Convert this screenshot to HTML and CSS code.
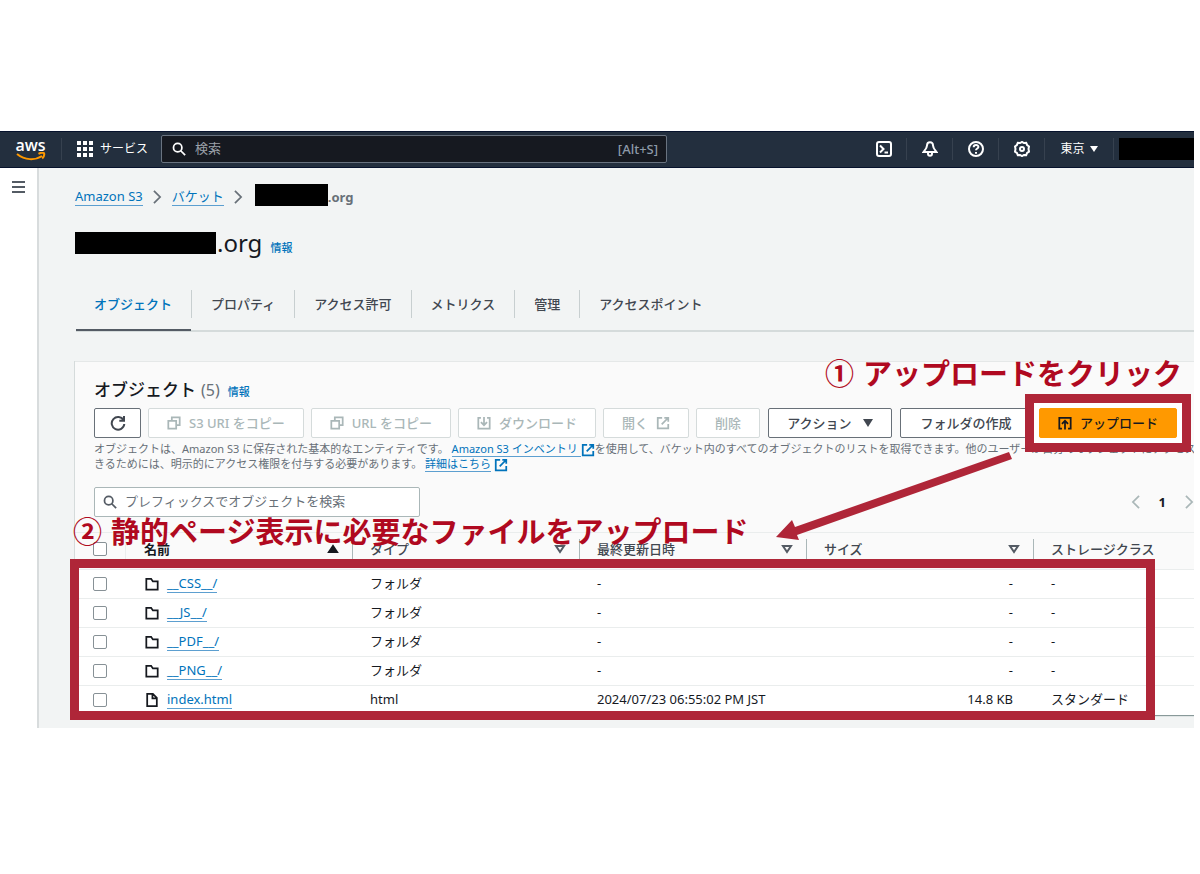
FILE: index.html
```html
<!DOCTYPE html>
<html lang="ja">
<head>
<meta charset="utf-8">
<title>Amazon S3</title>
<link rel="stylesheet" href="styles.css">
</head>
<body>
<svg class="defs" aria-hidden="true">
  <symbol id="search" viewBox="0 0 16 16"><circle cx="6.5" cy="6.5" r="4.8"/><path d="M10 10l5 5"/></symbol>
  <symbol id="copy" viewBox="0 0 16 16"><path d="M1.5 5.500h9v9h-9zM5.500 5.500v-4h9v9h-4"/></symbol>
  <symbol id="external" viewBox="0 0 16 16"><path d="M7 2H2v12h12V9M9.500 2H14v4.500M14 2L6.500 9.500"/></symbol>
  <symbol id="folder" viewBox="0 0 16 16"><path d="M1.500 2h5.500l2 3h5.500v9.500h-13z"/></symbol>
  <symbol id="file" viewBox="0 0 16 16"><path d="M2.500 1h6.500l4.500 4.500v9.500h-11zM8.500 1v5h5"/></symbol>
  <symbol id="chevron" viewBox="0 0 16 16"><path d="M4.500 1l7 7-7 7"/></symbol>
  <symbol id="sort" viewBox="0 0 12 12"><path d="M2 3h8L6 9z"/></symbol>
</svg>
<div class="console">
  <header class="topbar">
    <a class="logo" href="#" aria-label="aws"><span>aws</span>
      <svg class="smile" viewBox="0 0 30 9"><path d="M1 2c8 6.500 18 6.500 25 2"/><path d="M22.500 1.800c2-1 4.500-1.200 5.500-.6.500 1.300-.3 3.800-1.800 5.300"/></svg></a>
    <button class="services"><svg class="grid" viewBox="0 0 16 16"><path d="M0 0h4v4H0zM6 0h4v4H6zM12 0h4v4h-4zM0 6h4v4H0zM6 6h4v4H6zM12 6h4v4h-4zM0 12h4v4H0zM6 12h4v4H6zM12 12h4v4h-4z"/></svg>サービス</button>
    <label class="top-search"><svg class="icon"><use href="#search"/></svg><input type="text" placeholder="検索" aria-label="検索"><span>[Alt+S]</span></label>
    <nav class="tools">
      <button class="tool" aria-label="CloudShell"><svg class="icon big" viewBox="0 0 16 16"><rect x="1" y="1" width="14" height="14" rx="2"/><path d="M4 4.500L7.500 8 4 11.500M8.500 11.500H12"/></svg></button>
      <button class="tool" aria-label="通知"><svg class="icon big" viewBox="0 0 16 16"><path d="M8 1.200c-2 0-3 1.500-3 3.300C5 7 3.500 8.500 1.500 11h13C12.500 8.500 11 7 11 4.500c0-1.800-1-3.300-3-3.300zM6 11.500v1.300a2 2 0 004 0v-1.300"/></svg></button>
      <button class="tool" aria-label="ヘルプ"><svg class="icon big" viewBox="0 0 16 16"><circle cx="8" cy="8" r="7"/><path d="M5.700 6.200c0-3 4.700-3 4.700-.2C10.400 7.600 8 7.500 8 9.300M8 11v1.700"/></svg></button>
      <button class="tool" aria-label="設定"><svg class="icon big" viewBox="0 0 16 16"><path d="M8 .9l1.900 1.100 2.300-.1.900 2.100 1.900 1.400-.5 2.600.5 2.600-1.900 1.300-.9 2.200-2.300-.1L8 15.100l-1.900-1.100-2.300.1-.9-2.200L1 10.600 1.500 8 1 5.400 2.900 4l.9-2.100 2.300.1z"/><circle cx="8" cy="8" r="2"/></svg></button>
      <button class="tool region">東京<span class="down"></span></button>
      <span class="account"></span>
    </nav>
  </header>
  <div class="body">
    <aside class="rail"><button class="menu" aria-label="メニュー"><i></i><i></i><i></i></button></aside>
    <main class="main">
      <nav class="crumbs">
        <a class="link" href="#">Amazon S3</a><svg class="icon"><use href="#chevron"/></svg>
        <a class="link" href="#">バケット</a><svg class="icon"><use href="#chevron"/></svg>
        <span class="current"><span class="mask"></span>.org</span>
      </nav>
      <h1 class="title"><span class="mask"></span>.org <a href="#">情報</a></h1>
      <div class="tabs" role="tablist">
        <button class="tab active" role="tab">オブジェクト</button>
        <button class="tab" role="tab">プロパティ</button>
        <button class="tab" role="tab">アクセス許可</button>
        <button class="tab" role="tab">メトリクス</button>
        <button class="tab" role="tab">管理</button>
        <button class="tab" role="tab">アクセスポイント</button>
      </div>
      <section class="panel">
        <div class="panel-head">
          <h2>オブジェクト <span>(5)</span> <a href="#">情報</a></h2>
          <div class="buttons">
            <button class="btn refresh" aria-label="更新"><svg class="icon big" viewBox="0 0 16 16"><path d="M13.500 5.200A6.300 6.300 0 1014.300 9M14 1v4.800H9.300"/></svg></button>
            <button class="btn" disabled><svg class="icon"><use href="#copy"/></svg>S3 URI をコピー</button>
            <button class="btn" disabled><svg class="icon"><use href="#copy"/></svg>URL をコピー</button>
            <button class="btn" disabled><svg class="icon" viewBox="0 0 16 16"><path d="M4.500 2H1.500v12.500h13V2h-3M8 1v9.500M4.500 7L8 10.500 11.500 7"/></svg>ダウンロード</button>
            <button class="btn" disabled>開く<svg class="icon"><use href="#external"/></svg></button>
            <button class="btn" disabled>削除</button>
            <button class="btn actions">アクション<span class="down"></span></button>
            <button class="btn create">フォルダの作成</button>
            <div class="upload-wrap"><span class="callout"></span><button class="btn primary"><svg class="icon" viewBox="0 0 16 16"><path d="M4.500 14.500h-3V2h13v12.500h-3M8 15.500V6M4.500 9L8 5.500 11.500 9"/></svg>アップロード</button></div>
          </div>
          <p class="desc">オブジェクトは、Amazon S3 に保存された基本的なエンティティです。 <a class="link" href="#">Amazon S3 インベントリ </a> <svg class="icon"><use href="#external"/></svg>を使用して、バケット内のすべてのオブジェクトのリストを取得できます。他のユーザーが自分のオブジェクトにアクセスで<br>きるためには、明示的にアクセス権限を付与する必要があります。 <a class="link" href="#">詳細はこちら</a> <svg class="icon"><use href="#external"/></svg></p>
          <div class="filter">
            <label class="find"><svg class="icon"><use href="#search"/></svg><input type="text" placeholder="プレフィックスでオブジェクトを検索" aria-label="オブジェクトを検索"></label>
            <div class="pager"><button aria-label="前へ"><svg class="icon flip"><use href="#chevron"/></svg></button><button class="page">1</button><button aria-label="次へ"><svg class="icon"><use href="#chevron"/></svg></button></div>
          </div>
        </div>
        <table class="objects">
          <colgroup><col class="c-check"><col class="c-data"><col class="c-data"><col class="c-data"><col class="c-data"><col></colgroup>
          <thead><tr>
            <th><input type="checkbox" aria-label="すべて選択"></th>
            <th><div class="th name">名前<svg class="sort asc"><use href="#sort"/></svg></div></th>
            <th><div class="th">タイプ<svg class="sort"><use href="#sort"/></svg></div></th>
            <th><div class="th">最終更新日時<svg class="sort"><use href="#sort"/></svg></div></th>
            <th><div class="th">サイズ<svg class="sort"><use href="#sort"/></svg></div></th>
            <th><div class="th">ストレージクラス</div></th>
          </tr></thead>
          <tbody>
            <tr><td><input type="checkbox" aria-label="__CSS__/"></td><td><div class="object"><svg class="icon"><use href="#folder"/></svg><a class="link" href="#">__CSS__/</a></div></td><td>フォルダ</td><td>-</td><td class="size">-</td><td>-</td></tr>
            <tr><td><input type="checkbox" aria-label="__JS__/"></td><td><div class="object"><svg class="icon"><use href="#folder"/></svg><a class="link" href="#">__JS__/</a></div></td><td>フォルダ</td><td>-</td><td class="size">-</td><td>-</td></tr>
            <tr><td><input type="checkbox" aria-label="__PDF__/"></td><td><div class="object"><svg class="icon"><use href="#folder"/></svg><a class="link" href="#">__PDF__/</a></div></td><td>フォルダ</td><td>-</td><td class="size">-</td><td>-</td></tr>
            <tr><td><input type="checkbox" aria-label="__PNG__/"></td><td><div class="object"><svg class="icon"><use href="#folder"/></svg><a class="link" href="#">__PNG__/</a></div></td><td>フォルダ</td><td>-</td><td class="size">-</td><td>-</td></tr>
            <tr><td><input type="checkbox" aria-label="index.html"></td><td><div class="object"><svg class="icon"><use href="#file"/></svg><a class="link" href="#">index.html</a></div></td><td>html</td><td>2024/07/23 06:55:02 PM JST</td><td class="size">14.8 KB</td><td>スタンダード</td></tr>
          </tbody>
        </table>
        <span class="table-callout"></span>
        <p class="note step-one"><span>①</span>アップロードをクリック</p>
        <p class="note step-two"><span>②</span>静的ページ表示に必要なファイルをアップロード</p>
        <svg class="arrow" viewBox="0 0 236 90"><path d="M233 1l3 7L21 84l2 5L0 86 16 69l3 7z"/></svg>
      </section>
    </main>
  </div>
</div>
</body>
</html>
```
FILE: styles.css
```css
* { box-sizing: border-box; }
body { margin: 0; background: #fff; color: #16191f; font: 13px/20px "Noto Sans", "Noto Sans CJK JP", sans-serif; }
button, input { font: inherit; color: inherit; margin: 0; padding: 0; }
button { background: none; border: 0; white-space: nowrap; }
a { color: #0073bb; text-decoration: none; }
.defs { position: absolute; width: 0; height: 0; }
.icon { width: 14px; height: 14px; fill: none; stroke: currentColor; stroke-width: 2; flex: none; }
.icon.big { width: 16px; height: 16px; }
.link { border-bottom: 1px solid #5c9fd0; }
.console { margin: 131px 6px 0 0; overflow: hidden; }
.mask { display: inline-block; background: #000; }
.down { width: 0; border: 5px solid transparent; border-top: 8px solid currentColor; border-bottom: 0; }

.topbar { display: flex; align-items: center; height: 37px; padding-bottom: 2px; background: #232f3e; border: 1px solid #06122c; border-width: 1px 0; color: #fff; }
.logo { display: flex; flex-direction: column; align-items: center; width: 62px; border-right: 1px solid #36414f; color: #fff; font: 600 16px/14px "Open Sans", sans-serif; height: 22px; }
.smile { width: 30px; height: 9px; fill: none; stroke: #f90; stroke-width: 2; flex: none; }
.services { display: flex; align-items: center; gap: 7px; padding: 0 13px 0 15px; font-size: 12px; }
.grid { width: 16px; height: 16px; fill: #fff; }
.top-search { display: flex; align-items: center; gap: 9px; width: 506px; height: 28px; padding: 0 8px 0 10px; background: #161920; border: 1px solid #697380; border-radius: 2px; }
.top-search input { flex: 1; background: none; border: 0; padding-bottom: 2px; }
.top-search input::placeholder { color: #9ba1a9; }
.top-search span { color: #8d99a8; font-weight: 500; }
.tools { display: flex; align-items: center; margin-left: auto; }
.tool { display: flex; align-items: center; justify-content: center; width: 46px; height: 22px; border-right: 1px solid #36414f; }
.region { width: 69px; gap: 5px; font-size: 12px; }
.region .down { border-width: 6px 4px 0; }
.account { width: 75px; height: 22px; background: #000; margin-left: 5px; }

.body { display: flex; background: #f2f4f4; }
.rail { width: 39px; flex: none; background: #fff; border-right: 2px solid #d8dcdd; }
.menu { display: flex; flex-direction: column; gap: 3px; margin: 13px 0 0 12px; }
.menu i { width: 13px; height: 2px; background: #545b64; }
.main { flex: 1; min-width: 0; padding: 0 0 13px 36px; }
.crumbs { display: flex; align-items: center; gap: 8px; height: 26px; margin-top: 16px; color: #687078; }
.crumbs .link { line-height: 17px; }
.crumbs .icon { margin-left: -1px; }
.current { display: flex; align-items: center; font-weight: bold; }
.crumbs .mask { width: 73px; height: 22px; margin: 0 0 4px 2px; }
.title { display: flex; align-items: center; margin: 16px 0 0; font-size: 24px; font-weight: 400; line-height: 34px; }
.title .mask { width: 141px; height: 22px; margin-right: 1px; }
.title a { margin: 10px 0 0 8px; font-size: 11px; line-height: 16px; font-weight: 500; }
.tabs { display: flex; align-items: flex-start; margin: 30px 0 0 1px; border-bottom: 2px solid #d5dbdb; height: 42px; }
.tab { padding: 0 19px 1px; height: 28px; border-right: 1px solid #c8cfd0; color: #414750; font-weight: 500; }
.tab:last-child { border: 0; }
.tab.active { color: #0073bb; height: 41px; padding: 0 19px 12px 18px; border-right: 0; border-bottom: 2px solid #545b64; }
.tab.active + .tab { border-left: 1px solid #c8cfd0; }

.panel { position: relative; margin-top: 29px; background: #fafafa; border: 1px solid #e5e8e8; border-width: 1px 0 0; box-shadow: -1px 0 #d5dbdb, 0 1px 1px #899; }
.panel-head { padding: 16px 17px 15px 19px; }
h2 { display: flex; align-items: center; gap: 5px; margin: 0; height: 24px; font-size: 17px; line-height: 24px; font-weight: 500; }
h2 span { color: #687078; font-weight: 400; font-size: 16px; }
h2 a { font-size: 11px; margin: 3px 0 0 3px; }
.buttons { display: flex; gap: 7px; margin-top: 6px; }
.btn { display: flex; align-items: center; justify-content: center; gap: 8px; height: 30px; padding: 0 18px; border: 1px solid #687078; border-radius: 2px; background: #fff; color: #414750; font-weight: 500; }
.btn:disabled { color: #aab7b8; border-color: #d5dbdb; }
.refresh { width: 47px; padding: 0; }
.actions { width: 124px; gap: 11px; margin-left: 1px; }
.create { width: 132px; margin-left: 1px; }
.upload-wrap { position: relative; margin-left: auto; }
.callout { position: absolute; inset: -14px; background: #fff; border: 9px solid #af2638; z-index: 1; }
.primary { position: relative; z-index: 2; background: #f90; border-color: #f90; color: #16191f; }
.desc { margin: 3px 0 0; font-size: 11px; line-height: 15px; color: #687078; white-space: nowrap; }
.desc .icon { color: #0073bb; vertical-align: -2px; margin: -2px 0; }
.filter { display: flex; align-items: center; margin-top: 16px; }
.find { display: flex; align-items: center; gap: 8px; width: 326px; height: 30px; padding: 0 8px; background: #fff; border: 1px solid #aab7b8; border-radius: 2px; color: #545b64; }
.find input { flex: 1; border: 0; min-width: 0; background: none; padding-bottom: 2px; }
.find input::placeholder { color: #687078; }
.pager { display: flex; align-items: center; gap: 16px; margin: 0 -19px 0 auto; color: #aab7b8; }
.pager button { display: flex; }
.pager .page { color: #16191f; font-weight: bold; }
.flip { transform: scaleX(-1); }

.objects { width: 100%; table-layout: fixed; border-collapse: collapse; border-top: 1px solid #eaeded; }
.c-check { width: 50px; }
.c-data { width: 227px; }
th, td { padding: 0 18px; text-align: left; white-space: nowrap; }
th { height: 37px; font-weight: 500; color: #414750; padding: 0 0 4px; }
th:first-child { padding-left: 18px; }
td { height: 29px; line-height: 20px; background: #fff; border-top: 1px solid #eaeded; }
td:nth-last-child(-n+4) { padding-bottom: 2px; }
td.size { text-align: right; padding-right: 20px; }
.th { display: flex; align-items: center; justify-content: space-between; padding: 0 13px 0 17px; border-left: 1px solid #aab7b8; height: 20px; }
.th.name { color: #16191f; font-weight: bold; border-color: #eaeded; padding-left: 18px; }
.sort { width: 12px; height: 12px; fill: none; stroke: #545b64; stroke-width: 2; }
.sort.asc { fill: #16191f; stroke: #16191f; transform: scaleY(-1); }
input[type="checkbox"] { appearance: none; display: block; width: 14px; height: 14px; background: #fff; border: 1px solid #879196; border-radius: 2px; }
.object { display: flex; align-items: center; gap: 8px; padding-left: 2px; }
.object .link { line-height: 17px; }

.table-callout { position: absolute; left: -5px; bottom: -5px; right: 39px; height: 161px; border: 9px solid #af2638; }
.note { position: absolute; display: flex; gap: 9px; margin: 0; color: #b00920; font-size: 29px; line-height: 36px; font-weight: bold; white-space: nowrap; }
.step-one { right: 12px; top: -6px; }
.step-two { left: -2px; top: 152px; }
.arrow { position: absolute; right: 182px; top: 89px; width: 236px; height: 90px; fill: #af2638; }
```
